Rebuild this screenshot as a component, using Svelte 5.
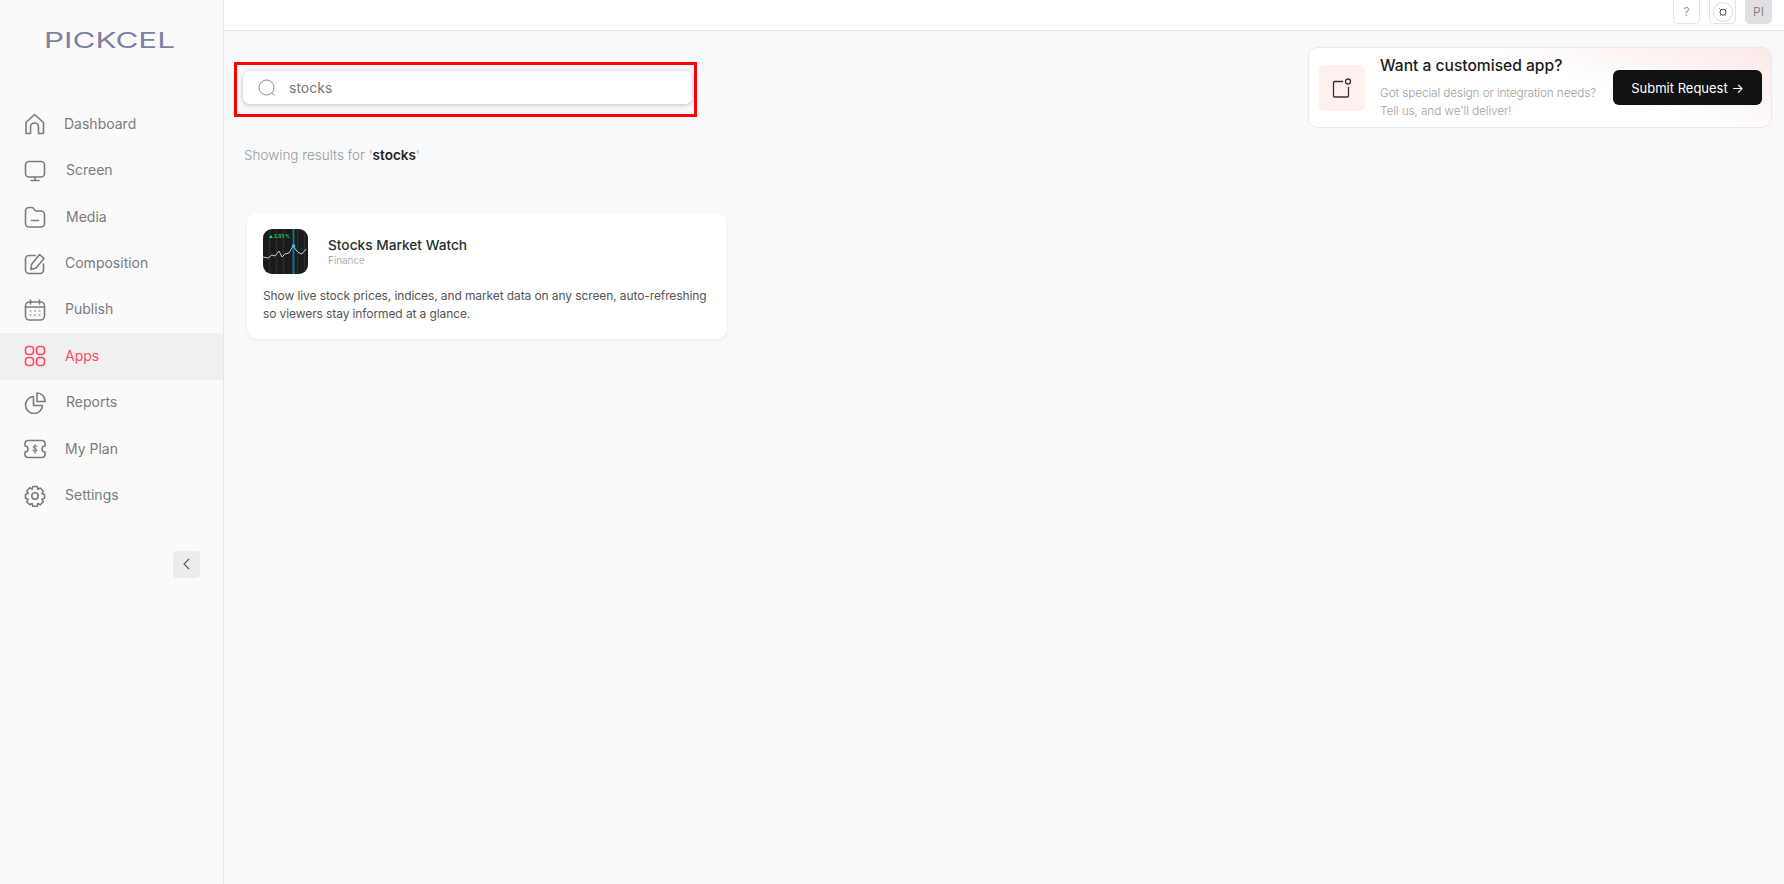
<script lang="ts">
  const NAV = [
    { label: 'Dashboard', icon: 'home', gap: 18 },
    { label: 'Screen', icon: 'screen', gap: 20 },
    { label: 'Media', icon: 'media', gap: 20 },
    { label: 'Composition', icon: 'compose', gap: 19 },
    { label: 'Publish', icon: 'publish', gap: 19 },
    { label: 'Apps', icon: 'apps', gap: 19, active: true },
    { label: 'Reports', icon: 'reports', gap: 20 },
    { label: 'My Plan', icon: 'plan', gap: 19 },
    { label: 'Settings', icon: 'settings', gap: 19 }
  ];
</script>

<div class="shell">
  <aside class="sidebar">
    <svg class="logo" width="140" height="28" viewBox="0 0 140 28">
      <text x="1" y="23" textLength="131" lengthAdjust="spacingAndGlyphs">PICKCEL</text>
    </svg>

    <nav class="nav">
      {#each NAV as item}
        <div class="nav-item" class:active={item.active} style="gap: {item.gap}px">
          <svg class="nav-icon" width="22" height="22" viewBox="0 0 22 22" fill="none" stroke="currentColor" stroke-width="1.6" stroke-linecap="round" stroke-linejoin="round">
            {#if item.icon === 'home'}
              <path d="M2 9.500 10.500 1.500 19.500 9.500V20.500H14.500V14a4 4 0 0 0-8 0v6.500H2Z" />
            {:else if item.icon === 'screen'}
              <rect x="1.500" y="1.500" width="19" height="15.500" rx="3.500" />
              <path d="M11 17v3.500M7 20.500h8" />
            {:else if item.icon === 'media'}
              <path d="M1.500 5a3.500 3.500 0 0 1 3.500-3.500h3c2 0 2 3.500 4.500 3.500H17a3.500 3.500 0 0 1 3.500 3.500v9a3.500 3.500 0 0 1-3.500 3.500H5a3.500 3.500 0 0 1-3.500-3.500Z" />
              <path d="M7.500 14.500h7" />
            {:else if item.icon === 'compose'}
              <path d="M11 2.500H5a3.500 3.500 0 0 0-3.500 3.500v11A3.500 3.500 0 0 0 5 20.500h11a3.500 3.500 0 0 0 3.500-3.500v-6" />
              <path d="M7.500 11.500 15.500 1.500l4.500 4-8 9.500-5 1.500Z" />
            {:else if item.icon === 'publish'}
              <rect x="1.500" y="3" width="19" height="18" rx="4" />
              <path d="M6.500 1v4M15.500 1v4M1.500 8h19" />
              <path d="M6 12h1M10.500 12h1M15 12h1M6 16h1M10.500 16h1M15 16h1" stroke-width="1" />
            {:else if item.icon === 'apps'}
              <rect x="1.500" y="1.500" width="8" height="8" rx="3" />
              <rect x="12.500" y="1.500" width="8" height="8" rx="3" />
              <rect x="1.500" y="12.500" width="8" height="8" rx="3" />
              <rect x="12.500" y="12.500" width="8" height="8" rx="3" />
            {:else if item.icon === 'reports'}
              <path d="M9.500 4.500a8.500 8.500 0 1 0 9 9H9.500Z" />
              <path d="M13 1a8 8 0 0 1 8 8.500h-8Z" />
            {:else if item.icon === 'plan'}
              <path d="M4 2.500h14a3 3 0 0 1 3 3v2.500a3 3 0 0 0 0 6v2.500a3 3 0 0 1-3 3H4a3 3 0 0 1-3-3V14a3 3 0 0 0 0-6V5.500a3 3 0 0 1 3-3Z" />
              <path d="M13 8.500c-.500-1-3.500-1.300-3.800.3-.300 2 3.900 1.200 3.700 3.300-.200 1.600-3.400 1.400-4-.1M11 6.500v9" stroke-width="1.100" />
            {:else if item.icon === 'settings'}
              <circle cx="11" cy="11" r="3.200" />
              <path d="M8.800 1.500h4.400l.7 2.800 2.400-1.300 3 3.200-1.500 2.400 2.700.9v3.800l-2.700.9 1.500 2.400-3 3.200-2.400-1.300-.7 2.800H8.800l-.7-2.800-2.400 1.300-3-3.200 1.500-2.400-2.700-.9V9.300l2.700-.9-1.500-2.400 3-3.200 2.400 1.300Z" />
            {/if}
          </svg>
          <span>{item.label}</span>
        </div>
      {/each}
    </nav>

    <button type="button" class="collapse" aria-label="Collapse">
      <svg width="10" height="12" viewBox="0 0 10 12" fill="none" stroke="#555" stroke-width="1.100"><path d="M7 1 2 6l5 5" /></svg>
    </button>
  </aside>

  <div class="content">
    <header class="topbar">
      <div class="tool">?</div>
      <div class="tool">
        <span class="bell">
          <svg width="10" height="10" viewBox="0 0 10 10" fill="none" stroke="#444" stroke-width="1"><circle cx="5" cy="5.200" r="3" /><path d="M1.500 1.500l1 1M8.500 1.500l-1 1M2.500 8.500l1-1M7.500 8.500l-1-1" /></svg>
        </span>
      </div>
      <div class="tool avatar">PI</div>
    </header>

    <main class="main">
      <div class="top-row">
        <div class="search-col">
          <div class="highlight">
            <div class="search">
              <svg width="20" height="20" viewBox="0 0 20 20" fill="none" stroke="#8a8a8a" stroke-width="1"><circle cx="9.500" cy="9.500" r="7.500" /><path d="m15 15 2.500 2.500" /></svg>
              <span>stocks</span>
            </div>
          </div>
          <p class="results">Showing results for '<b>stocks</b>'</p>
        </div>

        <div class="promo">
          <div class="promo-icon">
            <svg width="20" height="20" viewBox="0 0 20 20" fill="none" stroke="#333" stroke-width="1.300"><path d="M11 3.500H2.500a1 1 0 0 0-1 1V18a1 1 0 0 0 1 1h13a1 1 0 0 0 1-1V9" /><circle cx="16" cy="3.500" r="2.500" /></svg>
          </div>
          <div class="promo-text">
            <h2>Want a customised app?</h2>
            <p>Got special design or integration needs?<br />Tell us, and we'll deliver!</p>
          </div>
          <button type="button" class="submit">Submit Request →</button>
        </div>
      </div>

      <article class="card">
        <div class="card-head">
          <svg class="thumb" width="45" height="45" viewBox="0 0 45 45">
            <rect width="45" height="45" rx="9" fill="#1b1b1b" />
            <path d="M6.500 2v41M13.500 0v45M20.500 0v45M34.500 0v45M41.500 3v39" stroke="#2b2b2b" stroke-width="1.500" />
            <rect x="29.500" width="2" height="45" fill="#14708a" />
            <path d="M0 28l5 1 4-3 3 1 4-5 3 6 3-3 4-1 4-7 3 4 3 3 3 1 4-5" fill="none" stroke="#c9c9c9" stroke-width="1" />
            <circle cx="30.500" cy="17" r="1.800" fill="#22c3ee" />
            <path d="M6 9l2-3 2 3Z" fill="#22d36a" />
            <text x="11" y="9" class="thumb-label">2.93 %</text>
          </svg>
          <div class="card-title">
            <h3>Stocks Market Watch</h3>
            <span class="category">Finance</span>
          </div>
        </div>
        <p class="desc">Show live stock prices, indices, and market data on any screen, auto-refreshing so viewers stay informed at a glance.</p>
      </article>
    </main>
  </div>
</div>

<style>
  :global(body) {
    margin: 0;
    background: #f8f9fb;
    font-family: Inter, "Noto Sans", sans-serif;
  }

  .shell {
    display: flex;
    height: 884px;
    overflow: hidden;
  }

  .sidebar {
    width: 223px;
    flex: none;
    background: #fafafa;
    border-right: 1px solid #e8e8ea;
    padding-top: 25px;
  }

  .logo {
    display: block;
    margin-left: 43px;
  }

  .logo text {
    font-family: Inter, sans-serif;
    font-weight: 400;
    font-size: 21px;
    fill: #7d81a1;
  }

  .nav {
    margin-top: 48px;
  }

  .nav-item {
    height: 46.45px;
    display: flex;
    align-items: center;
    padding-left: 24px;
    color: #7c7c7c;
    font-size: 14px;
    font-weight: 400;
  }

  .nav-item span {
    margin-bottom: 2px;
  }

  .nav-icon {
    flex: none;
  }

  .nav-item.active {
    background: #f0f0f0;
    color: #ff4d5e;
  }

  .collapse {
    display: flex;
    align-items: center;
    justify-content: center;
    width: 27px;
    height: 27px;
    margin: 32px 0 0 173px;
    padding: 0;
    border: none;
    border-radius: 4px;
    background: #ececec;
  }

  .content {
    flex: 1;
    min-width: 0;
  }

  .topbar {
    height: 30px;
    background: #fff;
    border-bottom: 1px solid #e2e3e5;
    display: flex;
    justify-content: flex-end;
    gap: 9px;
    padding-right: 12px;
  }

  .tool {
    width: 27px;
    height: 24px;
    box-sizing: border-box;
    border: 1px solid #e4e4e4;
    border-top: none;
    border-radius: 0 0 5px 5px;
    background: #fff;
    display: flex;
    align-items: center;
    justify-content: center;
    font-size: 12px;
    color: #999;
  }

  .bell {
    width: 18px;
    height: 18px;
    border: 1px solid #ddd;
    border-radius: 50%;
    display: flex;
    align-items: center;
    justify-content: center;
  }

  .avatar {
    background: #e0e0e0;
    border-color: #e0e0e0;
    color: #888;
  }

  .main {
    padding: 0 12px 0 10px;
  }

  .top-row {
    display: flex;
    justify-content: space-between;
    align-items: flex-start;
  }

  .search-col {
    padding-top: 31px;
  }

  .highlight {
    width: 463px;
    height: 55px;
    box-sizing: border-box;
    border: 3px solid #ff0000;
    padding: 6px;
  }

  .search {
    width: 449px;
    height: 33px;
    box-sizing: border-box;
    background: #fff;
    border-radius: 7px;
    box-shadow: 0 1px 5px rgba(40, 50, 70, 0.28);
    display: flex;
    align-items: center;
    gap: 12px;
    padding-left: 14px;
    font-size: 14px;
    color: #777;
  }

  .results {
    margin: 29px 0 0 10px;
    font-size: 13.500px;
    font-weight: 300;
    line-height: 18px;
    color: #9a9a9a;
  }

  .results b {
    font-weight: 600;
    color: #222;
  }

  .promo {
    margin-top: 16px;
    width: 464px;
    height: 81px;
    box-sizing: border-box;
    border: 1px solid #e9eaec;
    border-radius: 10px;
    background: linear-gradient(200deg, #fae9e7 0%, #fff 42%);
    display: flex;
    align-items: center;
    padding: 0 9px 0 10px;
  }

  .promo-icon {
    width: 46px;
    height: 46px;
    flex: none;
    border-radius: 5px;
    background: #fdf0ef;
    display: flex;
    align-items: center;
    justify-content: center;
  }

  .promo-text {
    margin-left: 15px;
    flex: 1;
    white-space: nowrap;
  }

  .promo h2 {
    margin: 0 0 7px;
    font-size: 15.600px;
    font-weight: 500;
    line-height: 22px;
    color: #1c1c1c;
  }

  .promo p {
    margin: 0;
    font-size: 11.900px;
    font-weight: 300;
    line-height: 18px;
    color: #a2a2a2;
    letter-spacing: -0.15px;
  }

  .submit {
    width: 149px;
    height: 35px;
    flex: none;
    border: none;
    border-radius: 6px;
    background: #111;
    color: #fff;
    font-family: inherit;
    font-size: 13px;
    font-weight: 400;
  }

  .card {
    width: 480px;
    height: 126px;
    box-sizing: border-box;
    margin: 49px 0 0 13px;
    padding: 16px;
    background: #fff;
    border-radius: 10px;
    box-shadow: 0 1px 3px rgba(30, 40, 60, 0.08);
  }

  .card-head {
    display: flex;
    align-items: center;
    gap: 20px;
  }

  .thumb {
    flex: none;
  }

  .thumb-label {
    font-family: Inter, sans-serif;
    font-size: 4.500px;
    font-weight: 700;
    fill: #22d36a;
  }

  .card-title {
    margin-bottom: 2px;
  }

  h3 {
    margin: 0;
    font-size: 13.700px;
    font-weight: 500;
    line-height: 19px;
    color: #26302e;
  }

  .category {
    display: block;
    font-size: 10px;
    font-weight: 300;
    line-height: 11px;
    color: #9a9a9a;
  }

  .desc {
    margin: 13px 0 0;
    font-size: 12px;
    line-height: 18px;
    font-weight: 400;
    color: #555;
    letter-spacing: -0.1px;
  }
</style>
